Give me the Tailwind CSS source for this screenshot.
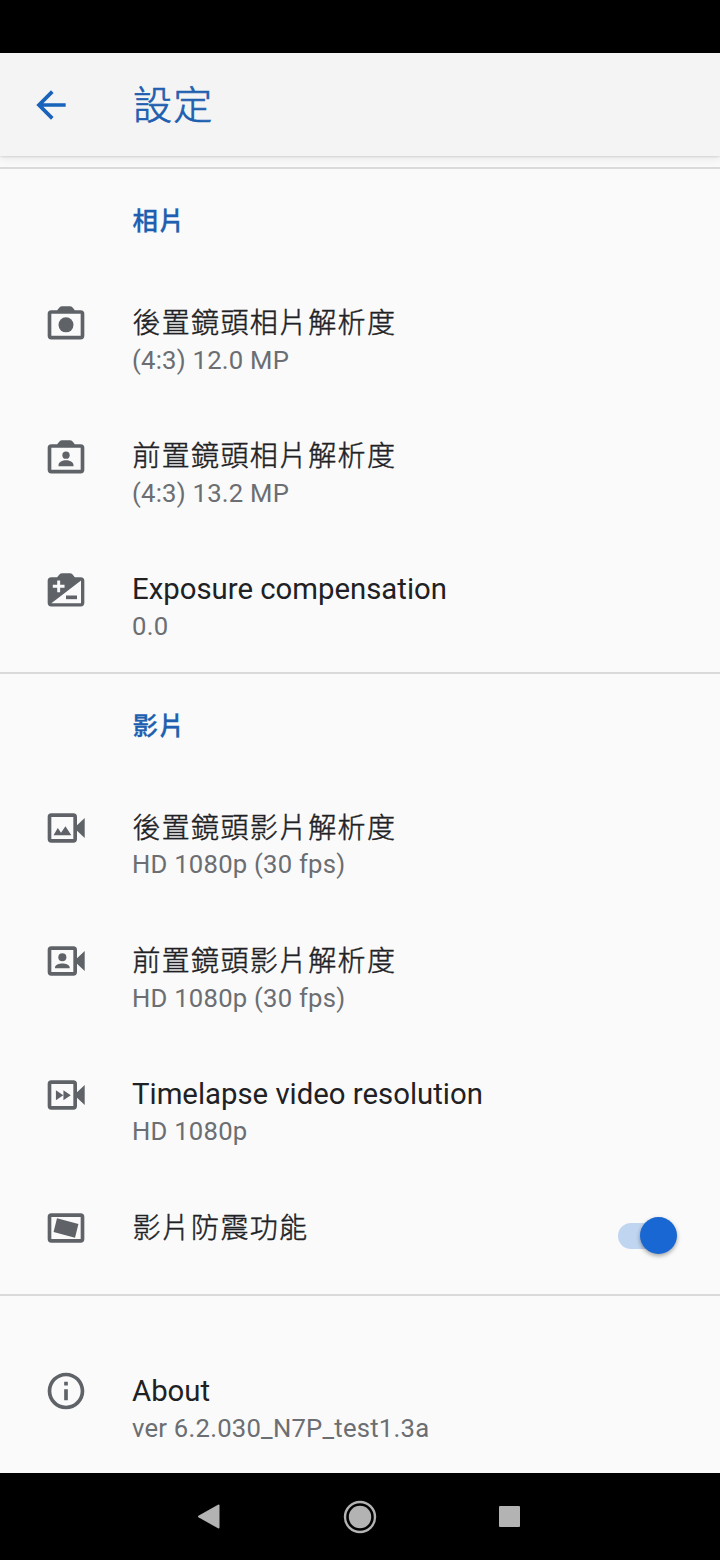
<!DOCTYPE html>
<html lang="zh-Hant">
<head>
<meta charset="utf-8">
<title>設定</title>
<script src="https://cdn.jsdelivr.net/npm/@tailwindcss/browser@4"></script>
</head>
<body class="bg-black">
<div class="flex h-[1560px] w-[720px] flex-col overflow-hidden bg-black font-['Roboto','Noto_Sans_CJK_TC',sans-serif]">
  <div class="h-[53px] shrink-0"></div>
  <header class="z-10 flex h-[103px] shrink-0 items-center bg-[#f4f4f4] pl-[29px] text-[#1f5fb0] shadow-[0_1px_2px_rgba(0,0,0,0.12),0_4px_8px_rgba(0,0,0,0.06)]">
    <svg class="h-11 w-11" viewBox="0 0 24 24" fill="#1a62ba"><path d="M20 11H7.83l5.59-5.59L12 4l-8 8 8 8 1.41-1.41L7.83 13H20z"/></svg>
    <h1 class="mt-[2px] ml-[60px] text-[39px] leading-[60px] font-light tracking-[1.3px] [-webkit-text-stroke:0.7px_currentColor]">設定</h1>
  </header>
  <main class="flex h-[1317px] shrink-0 flex-col bg-[#fafafa] pt-[11px] text-[#202124]">
    <section class="flex h-[505px] shrink-0 flex-col border-t-2 border-[#dadada]">
      <h2 class="h-[103.7px] shrink-0 pt-[32px] pl-[132.500px] text-[25.500px] leading-[40px] font-medium tracking-[1px] text-[#1f5fb0] [-webkit-text-stroke:0.3px_currentColor]">相片</h2>
      <div class="flex h-[133.33px] shrink-0 pl-11">
        <svg class="mt-[28.6px] mr-11 h-11 w-11" viewBox="0 0 24 24" fill="#5f6368"><path fill-rule="evenodd" d="M20 5h-3.17L15.6 3.5Q15 2.8 14.100 2.800H9.900Q9 2.800 8.400 3.500L7.170 5H4Q2 5 2 7v12q0 2 2 2h16q2 0 2-2V7q0-2-2-2zm0 14H4V7h16z"/><circle cx="12" cy="13" r="4.1"/></svg>
        <div><div class="mt-[31px] pl-[0.5px] text-[28px] leading-[40px] font-light tracking-[1.3px] [-webkit-text-stroke:0.45px_currentColor]">後置鏡頭相片解析度</div><div class="-mt-px text-[25.67px] leading-[34px] tracking-[0.23px] text-[#6b6e72]">(4:3) 12.0 MP</div></div>
      </div>
      <div class="flex h-[133.33px] shrink-0 pl-11">
        <svg class="mt-[28.6px] mr-11 h-11 w-11" viewBox="0 0 24 24" fill="#5f6368"><path fill-rule="evenodd" d="M20 5h-3.17L15.6 3.5Q15 2.8 14.100 2.800H9.900Q9 2.800 8.400 3.500L7.170 5H4Q2 5 2 7v12q0 2 2 2h16q2 0 2-2V7q0-2-2-2zm0 14H4V7h16z"/><circle cx="12" cy="11" r="2"/><path d="M7.9 17v-.6c0-1.6 2.2-2.6 4.1-2.6s4.1 1 4.1 2.6v.6z"/></svg>
        <div><div class="mt-[31px] pl-[0.5px] text-[28px] leading-[40px] font-light tracking-[1.3px] [-webkit-text-stroke:0.45px_currentColor]">前置鏡頭相片解析度</div><div class="-mt-px text-[25.67px] leading-[34px] tracking-[0.23px] text-[#6b6e72]">(4:3) 13.2 MP</div></div>
      </div>
      <div class="flex h-[133.33px] shrink-0 pl-11">
        <svg class="mt-[28.6px] mr-11 h-11 w-11" viewBox="0 0 24 24" fill="#5f6368"><path fill-rule="evenodd" d="M20 5h-3.17L15.6 3.5Q15 2.8 14.100 2.800H9.900Q9 2.800 8.400 3.500L7.170 5H4Q2 5 2 7v12q0 2 2 2h16q2 0 2-2V7q0-2-2-2zM7.2 6.8h1.6v2.4h2.4v1.6H8.8v2.4H7.2v-2.4H4.8V9.200h2.4zM20.200 19.200H4L20.200 6.800z"/><path d="M12 15h6v2h-6z"/></svg>
        <div><div class="mt-[30px] text-[29.33px] leading-[40px]">Exposure compensation</div><div class="text-[25.67px] leading-[34px] tracking-[0.23px] text-[#6b6e72]">0.0</div></div>
      </div>
    </section>
    <section class="flex h-[622px] shrink-0 flex-col border-t-2 border-[#dadada]">
      <h2 class="h-[103.3px] shrink-0 pt-[32px] pl-[132.500px] text-[25.500px] leading-[40px] font-medium tracking-[1px] text-[#1f5fb0] [-webkit-text-stroke:0.3px_currentColor]">影片</h2>
      <div class="flex h-[133.33px] shrink-0 pl-11">
        <svg class="mt-[28.6px] mr-11 h-11 w-11" viewBox="0 0 24 24" fill="#5f6368"><path fill-rule="evenodd" d="M4 4h12q2 0 2 2v4.500l4.200-4v11l-4.200-4V18q0 2-2 2H4q-2 0-2-2V6q0-2 2-2zm0 2v12h12V6z"/><path d="M5.200 16l2.300-4 1.800 2.600L11.700 11l3.200 5z"/></svg>
        <div><div class="mt-[31.500px] pl-[0.5px] text-[28px] leading-[40px] font-light tracking-[1.3px] [-webkit-text-stroke:0.45px_currentColor]">後置鏡頭影片解析度</div><div class="-mt-[1.500px] text-[25.67px] leading-[34px] tracking-[0.23px] text-[#6b6e72]">HD 1080p (30 fps)</div></div>
      </div>
      <div class="flex h-[133.33px] shrink-0 pl-11">
        <svg class="mt-[28.6px] mr-11 h-11 w-11" viewBox="0 0 24 24" fill="#5f6368"><path fill-rule="evenodd" d="M4 4h12q2 0 2 2v4.500l4.200-4v11l-4.200-4V18q0 2-2 2H4q-2 0-2-2V6q0-2 2-2zm0 2v12h12V6z"/><circle cx="10" cy="10" r="2.200"/><path d="M6 16v-.5c0-1.500 2.200-2.200 4-2.200s4 .7 4 2.200v.5z"/></svg>
        <div><div class="mt-[31px] pl-[0.5px] text-[28px] leading-[40px] font-light tracking-[1.3px] [-webkit-text-stroke:0.45px_currentColor]">前置鏡頭影片解析度</div><div class="-mt-px text-[25.67px] leading-[34px] tracking-[0.23px] text-[#6b6e72]">HD 1080p (30 fps)</div></div>
      </div>
      <div class="flex h-[133.33px] shrink-0 pl-11">
        <svg class="mt-[28.6px] mr-11 h-11 w-11" viewBox="0 0 24 24" fill="#5f6368"><path fill-rule="evenodd" d="M4 4h12q2 0 2 2v4.500l4.200-4v11l-4.200-4V18q0 2-2 2H4q-2 0-2-2V6q0-2 2-2zm0 2v12h12V6z"/><path d="M6.500 9.400l4 2.700-4 2.700zM10.600 9.400l4 2.700-4 2.700z"/></svg>
        <div><div class="mt-[30px] text-[29.33px] leading-[40px]">Timelapse video resolution</div><div class="text-[25.67px] leading-[34px] tracking-[0.23px] text-[#6b6e72]">HD 1080p</div></div>
      </div>
      <div class="flex h-[116px] shrink-0 pl-11">
        <svg class="mt-[28.6px] mr-11 h-11 w-11" viewBox="0 0 24 24" fill="#5f6368"><path fill-rule="evenodd" d="M4 4h16q2 0 2 2v12q0 2-2 2H4q-2 0-2-2V6q0-2 2-2zm0 2v12h16V6z"/><path d="M7.100 6.700l11.700 3.100-1.900 7.500L5.200 14.200z"/></svg>
        <div class="mt-[31.500px] pl-[0.5px] text-[28px] leading-[40px] font-light tracking-[1.3px] [-webkit-text-stroke:0.45px_currentColor]">影片防震功能</div>
        <div class="mt-[40px] mr-[43px] ml-auto flex h-[37px] w-[59px] items-center">
          <div class="flex h-[26px] w-[50px] items-center rounded-full bg-[#c0d5f0]"><div class="ml-[22px] h-[37px] w-[37px] shrink-0 rounded-full bg-[#1967d2] shadow-[0_2px_4px_rgba(0,0,0,0.35)]"></div></div>
        </div>
      </div>
    </section>
    <section class="flex h-[179px] shrink-0 flex-col border-t-2 border-[#dadada] pt-[44px]">
      <div class="flex h-[133px] shrink-0 pl-11">
        <svg class="mt-[28.8px] mr-11 h-11 w-11" viewBox="0 0 24 24" fill="#5f6368"><path d="M11 7h2v2h-2zm0 4h2v6h-2zm1-9C6.480 2 2 6.480 2 12s4.480 10 10 10 10-4.480 10-10S17.520 2 12 2zm0 18c-4.410 0-8-3.590-8-8s3.590-8 8-8 8 3.590 8 8-3.590 8-8 8z"/></svg>
        <div><div class="mt-[31px] text-[29.33px] leading-[40px]">About</div><div class="text-[25.67px] leading-[34px] tracking-[0.23px] text-[#6b6e72]">ver 6.2.030_N7P_test1.3a</div></div>
      </div>
    </section>
  </main>
  <nav class="grid h-[87px] shrink-0 grid-cols-[22px_34px_22px] items-center gap-x-[123.500px] pl-[197.500px]">
    <svg class="h-[25px] w-[22px]" viewBox="0 0 22 25" fill="#b3b3b3"><path d="M.4 11.700 20 .7Q21.500.2 21.500 1.500v22q0 1.300-1.500.8L.4 13.300Q-.4 12.500.4 11.700z"/></svg>
    <svg class="h-[34px] w-[34px]" viewBox="0 0 34 34" fill="#b3b3b3"><circle cx="17" cy="17" r="11.200"/><circle cx="17" cy="17" r="15" fill="none" stroke="#b3b3b3" stroke-width="2.400"/></svg>
    <div class="-ml-[2px] h-[21.500px] w-[21.500px] rounded-[1px] bg-[#b3b3b3]"></div>
  </nav>
</div>
</body>
</html>
